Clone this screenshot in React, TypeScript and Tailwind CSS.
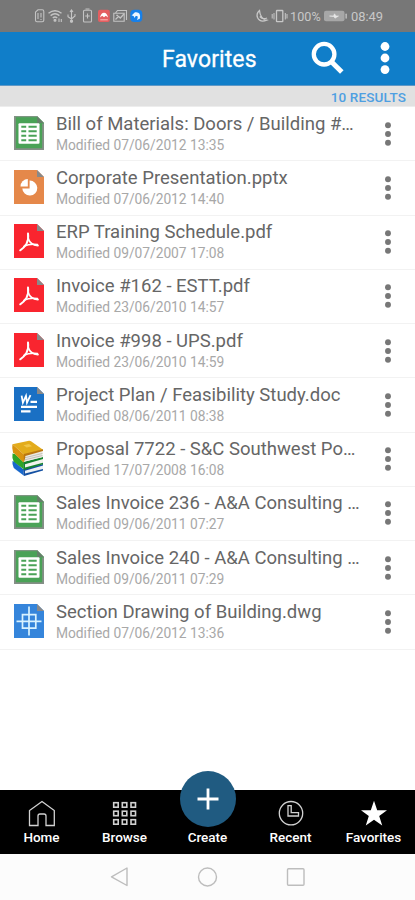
import React from 'react';

type Kind = 'sheet' | 'slides' | 'pdf' | 'doc' | 'books' | 'cad';

type FileItem = { name: string; date: string; kind: Kind };

const files: FileItem[] = [
  { name: 'Bill of Materials: Doors / Building #…', date: '07/06/2012 13:35', kind: 'sheet' },
  { name: 'Corporate Presentation.pptx', date: '07/06/2012 14:40', kind: 'slides' },
  { name: 'ERP Training Schedule.pdf', date: '09/07/2007 17:08', kind: 'pdf' },
  { name: 'Invoice #162 - ESTT.pdf', date: '23/06/2010 14:57', kind: 'pdf' },
  { name: 'Invoice #998 - UPS.pdf', date: '23/06/2010 14:59', kind: 'pdf' },
  { name: 'Project Plan / Feasibility Study.doc', date: '08/06/2011 08:38', kind: 'doc' },
  { name: 'Proposal 7722 - S&C Southwest Po…', date: '17/07/2008 16:08', kind: 'books' },
  { name: 'Sales Invoice 236 - A&A Consulting …', date: '09/06/2011 07:27', kind: 'sheet' },
  { name: 'Sales Invoice 240 - A&A Consulting …', date: '09/06/2011 07:29', kind: 'sheet' },
  { name: 'Section Drawing of Building.dwg', date: '07/06/2012 13:36', kind: 'cad' },
];

const pageColor: Record<Kind, string> = {
  sheet: '#4aa257',
  slides: '#e5884a',
  pdf: '#f9252f',
  doc: '#1a70c4',
  books: 'none',
  cad: '#3585db',
};

function Glyph({ kind }: { kind: Kind }) {
  if (kind === 'sheet') {
    return (
      <g>
        <path d="M.9 0V33.1H29.1V7.5" fill="none" stroke="#858f87" strokeWidth="1.9" />
        <path d="M0 .6H23" stroke="#7e9682" strokeWidth="1.2" />
        <rect x="4.5" y="7.2" width="21" height="20.6" rx="1" fill="#fff" />
        <path d="M7.3 10.8H12.2M7.3 15.2H12.2M7.3 19.7H12.2M7.3 24.2H12.2M14.5 10.8H22.7M14.5 15.2H22.7M14.5 19.7H22.7M14.5 24.2H22.7" stroke="#4aa257" strokeWidth="2.1" />
      </g>
    );
  }
  if (kind === 'slides') {
    return (
      <g fill="#fff">
        <path d="M15.6 10.6A7.5 7.5 0 1 1 8.3 18.4H15.6Z" />
        <path d="M13.8 9V16.4H6.5A7.3 7.3 0 0 1 13.8 9Z" />
      </g>
    );
  }
  if (kind === 'pdf') {
    return (
      <g fill="none" stroke="#fff" strokeLinecap="round" strokeLinejoin="round">
        <path d="M14 9.5C14.7 14 14.4 16 12.5 19.7C10.5 23 8.6 25 6.2 26.3" strokeWidth="2" />
        <path d="M14.3 14.5C15.2 17.6 17.2 19.7 20 20.8L24 21.6" strokeWidth="1.7" />
        <path d="M9.8 22.3C13.5 20.5 18.5 20 23.5 20.5" strokeWidth="1.5" />
      </g>
    );
  }
  if (kind === 'doc') {
    return (
      <g fill="none" stroke="#fff">
        <path d="M7.6 8.6L8.9 15.6L12 8.8L13 15.6L16.5 8.2" strokeWidth="1.8" />
        <path d="M16.5 14.8H23M7 19.8H23M7 24.4H16.5" strokeWidth="2.2" />
      </g>
    );
  }
  return (
    <g fill="none" stroke="#d8f2ff" strokeWidth="1.7">
      <path d="M15 2.5V31.5M2.5 17.4H27.5" />
      <path d="M8.5 10.6H21.8V24.2H8.5Z" />
    </g>
  );
}

function Books() {
  return (
    <svg width="34" height="38" viewBox="0 0 34 38" className="-ml-[3px] block shrink-0">
      <path d="M2 25L12 31L32 26V31L13 36.3L4 31Z" fill="#eef1f5" />
      <path d="M1.5 22L4 23L12 30L13 36.8L2.8 29Q.8 25 1.5 22Z" fill="#1767cc" />
      <path d="M12 30L32 24.7V26.4L14 31.8V34.6L32 30V31.5L13 37Z" fill="#1450a2" />
      <path d="M2 16L13 24L32 19V25L13 30Z" fill="#f2f3ec" />
      <path d="M1.5 14.5L4 15L12.3 23L13 30.6L2.8 22.8Q.7 18.5 1.5 14.5Z" fill="#2fa528" />
      <path d="M12 23L32 17.8V20L14 25.3V28.4L32 23.7V25.3L13 31Z" fill="#15842e" />
      <path d="M3 8L13 16L31.5 12V18.3L13 22.8Z" fill="#eceae5" />
      <path d="M13 19L31.5 14.4M13 21L31.5 16.5" stroke="#b9b4ac" strokeWidth=".8" />
      <path d="M1.4 5.2L18 1.8Q19 1.6 20 2.2L32 10.8L13.2 15.8Z" fill="#e3ac1c" />
      <path d="M1.4 5.2L13.2 15.8L12.8 23.7L2 13.3Q.8 8.5 1.4 5.2Z" fill="#d9930f" />
      <path d="M12.8 15L32 10.3V12L14.3 16.9V18.5L12.8 23.5Z" fill="#bb7711" />
      <path d="M12.5 6.2L18 5L21 7.2L15.7 8.6Z" fill="#f0c649" />
    </svg>
  );
}

function FileIcon({ kind }: { kind: Kind }) {
  if (kind === 'books') return <Books />;
  return (
    <svg width="30" height="34" viewBox="0 0 30 34" className="block shrink-0">
      <path d="M0 0H23L30 7V34H0Z" fill={pageColor[kind]} />
      <path d="M23 0L30 7H23Z" fill={kind === 'sheet' ? '#66806b' : '#898989'} />
      <Glyph kind={kind} />
    </svg>
  );
}

function Dots() {
  return (
    <svg width="8" height="26" viewBox="0 0 8 26" fill="#777" className="block">
      <circle cx="4" cy="4.2" r="2.95" />
      <circle cx="4" cy="13" r="2.95" />
      <circle cx="4" cy="21.7" r="2.95" />
    </svg>
  );
}

function StatusBar() {
  return (
    <div className="flex h-8 shrink-0 items-center justify-between bg-[#777] pl-[33px] pr-[32px] text-[#c8c8c8]">
      <svg width="112" height="16" viewBox="0 0 112 16" fill="none" stroke="#c4c4c4" strokeWidth="1.1" className="block">
        <path d="M2.5 4.2L5 1.8H9.2Q10.8 1.8 10.8 3.4V12.2Q10.8 13.8 9.2 13.8H4Q2.5 13.8 2.5 12.2Z" />
        <path d="M5 5V11M8 5V9.5M8 11V12" />
        <path d="M15.5 5.3Q22 .2 28.5 5.3M17.6 7.6Q22 4 26.4 7.6M19.8 10Q22 8 24.2 10" strokeWidth="1.4" />
        <circle cx="22" cy="12.2" r="1" fill="#c4c4c4" />
        <path d="M26 10.5V14M28.3 11V14" />
        <path d="M38.5 2V14.3M35 6.5V8.6L38.5 11L42 8V6M37 4L38.5 2L40 4" />
        <circle cx="38.5" cy="13.2" r="1.1" fill="#c4c4c4" />
        <rect x="50.5" y="2.2" width="8" height="11.8" rx="1" />
        <path d="M52.5 1H56.5M54.5 5.5V10.5M52.2 8H56.8" />
        <rect x="65" y="1.8" width="11.8" height="12.2" rx="2" fill="#e45e60" stroke="none" />
        <path d="M67 9.5Q68 4.7 71 4.7T75 9.5L72.8 7.7L71 9.2L69.2 7.7Z" fill="#fff" stroke="none" />
        <path d="M67.3 11.8H74.8" stroke="#f7b3b1" />
        <path d="M82.5 5L84.5 2.5H93.5V12M80.8 5.3H91.2V13.3H80.8Z" />
        <path d="M82.5 11.5L85.5 8.3L87.3 10L91 6M83.3 7.3H85" strokeWidth="1.3" />
        <rect x="97.3" y="1.8" width="12" height="12.2" rx="4" fill="#1780e9" stroke="none" />
        <path d="M98.5 7.5L102 4.3Q108 3.4 107 10.5L104 12Q106 7 102.7 8.1L101.5 10Q101.2 7 98.5 7.5Z" fill="#eaf5ff" stroke="none" />
      </svg>
      <div className="flex items-center">
        <svg width="33" height="16" viewBox="0 0 33 16" fill="none" stroke="#c8c8c8" strokeWidth="1.3" className="block">
          <path d="M4.5 2.5Q1 5.5 2.5 9.5Q5 14.8 11.7 12.2Q5.2 10.7 4.5 2.5ZM4.8 8.5Q7.5 12 12 10" />
          <rect x="21.5" y="2.5" width="6.3" height="11.2" rx=".5" />
          <path d="M19 5V11.5M30.3 5V11.5M17.2 6V10.5M32 6V10.5" strokeWidth="1" />
        </svg>
        <span className="ml-[2px] w-[32px] whitespace-nowrap pt-px text-[12.6px] leading-4 tracking-[0.1px]">100%</span>
        <svg width="24" height="12" viewBox="0 0 24 12" className="ml-[2px] block">
          <rect x="0" y=".7" width="20.5" height="10.5" rx="2" fill="#a7a7a7" />
          <path d="M5.5 6H9.5L10.5 3.8L12 6H14.5L11 8.2L9.8 6.5Z" fill="#e7e7e7" stroke="#e7e7e7" strokeWidth=".6" />
          <rect x="21.4" y="3.5" width="1.5" height="5.2" rx=".7" fill="#bdbdbd" />
        </svg>
        <span className="ml-[3px] w-[32px] whitespace-nowrap pt-px text-[12.9px] leading-4">08:49</span>
      </div>
    </div>
  );
}

function Header() {
  return (
    <header className="flex h-[54px] shrink-0 items-center border-b border-[#5f98c6] bg-[#107ec9] pl-[162px] text-white">
      <h1 className="w-[149px] whitespace-nowrap pt-[2px] text-[23px] font-normal leading-7 tracking-[0.1px] [-webkit-text-stroke:0.3px_#fff]">Favorites</h1>
      <svg width="33" height="34" viewBox="0 0 33 34" fill="none" stroke="#fff" className="-mt-[2px] block">
        <circle cx="13.1" cy="13.2" r="10.3" strokeWidth="4.3" />
        <path d="M20.4 20.8L30.8 31" strokeWidth="5" />
      </svg>
      <svg width="10" height="34" viewBox="0 0 10 34" fill="#fff" className="-mt-[2px] ml-[36px] block">
        <circle cx="5" cy="5.5" r="4.4" />
        <circle cx="5" cy="17" r="4.4" />
        <circle cx="5" cy="28.6" r="4.4" />
      </svg>
    </header>
  );
}

const tabs: { label: string; icon: React.ReactNode }[] = [
  {
    label: 'Home',
    icon: <path d="M1.5 25.5V10.5L14 1.5L26.3 10.5V25.5H18V16Q18 14 16 14H12Q10 14 10 16V25.5Z" />,
  },
  {
    label: 'Browse',
    icon: (
      <g strokeWidth="1.6">
        {[2.7, 11.2, 19.7].map((y) =>
          [2.7, 11.3, 20].map((x) => <rect key={`${x}-${y}`} x={x} y={y} width="4.5" height="4.5" />),
        )}
      </g>
    ),
  },
  { label: 'Create', icon: null },
  {
    label: 'Recent',
    icon: (
      <g>
        <circle cx="14" cy="13.2" r="11.7" />
        <path d="M11 5.7H14.2V12.7H21.5V16H11Z" />
      </g>
    ),
  },
  {
    label: 'Favorites',
    icon: <path d="M14 .8L17.2 10.2H27L19.2 15.9L22.2 25.5L14 19.8L5.8 25.5L8.8 15.9L1 10.2H10.8Z" fill="#fff" stroke="none" />,
  },
];

function TabBar() {
  return (
    <nav className="relative grid h-[64px] shrink-0 grid-cols-5 bg-black text-white">
      {tabs.map((t) => (
        <div key={t.label} className="flex flex-col items-center pt-[10px]">
          <svg width="28" height="28" viewBox="0 0 28 28" fill="none" stroke="#d2d2d2" strokeWidth="1.3" className="block">
            {t.icon}
          </svg>
          <span className="mt-px whitespace-nowrap text-[13.5px] font-medium leading-4">{t.label}</span>
        </div>
      ))}
      <div className="absolute -top-[19px] left-[180px] flex size-14 items-center justify-center rounded-full bg-[#205b81]">
        <svg width="22" height="22" viewBox="0 0 22 22" stroke="#fff" strokeWidth="2.8">
          <path d="M11 .5V21.5M.5 11H21.5" />
        </svg>
      </div>
    </nav>
  );
}

export default function App() {
  return (
    <div className="flex h-[900px] w-[415px] flex-col overflow-hidden bg-white font-['Roboto',sans-serif]">
      <StatusBar />
      <Header />
      <div className="flex h-[21px] shrink-0 items-center justify-end border-b border-[#ededed] bg-[#e1e1e1] pr-[9px] pt-[2px]">
        <span className="whitespace-nowrap text-[13.5px] font-medium leading-4 tracking-[0.15px] text-[#4e9fe1]">10 RESULTS</span>
      </div>
      <main className="flex-1">
        {files.map((f) => (
          <div key={f.name} className="flex h-[54.25px] items-center border-b border-[#f2f2f2] pl-[14px] pr-[23.5px]">
            <div className="flex w-[42px] shrink-0 items-center pb-[2px]">
              <FileIcon kind={f.kind} />
            </div>
            <div className="min-w-0 flex-1">
              <div className="whitespace-nowrap text-[18.5px] leading-[22px] text-[#666]">{f.name}</div>
              <div className="whitespace-nowrap text-[13.8px] leading-[20px] tracking-[-0.03px] text-[#a8a8a8]">Modified {f.date}</div>
            </div>
            <Dots />
          </div>
        ))}
      </main>
      <TabBar />
      <div className="flex h-[46px] shrink-0 items-center bg-[#fcfcfc] pl-[110px]">
        <svg width="196" height="24" viewBox="0 0 196 24" fill="none" stroke="#bdbdbd" strokeWidth="1.4" className="block">
          <path d="M17 3V20.5L1.5 11.8Z" strokeLinejoin="round" />
          <circle cx="97.5" cy="12" r="9" />
          <rect x="177.5" y="3.8" width="16.5" height="16.5" rx="1" />
        </svg>
      </div>
    </div>
  );
}
